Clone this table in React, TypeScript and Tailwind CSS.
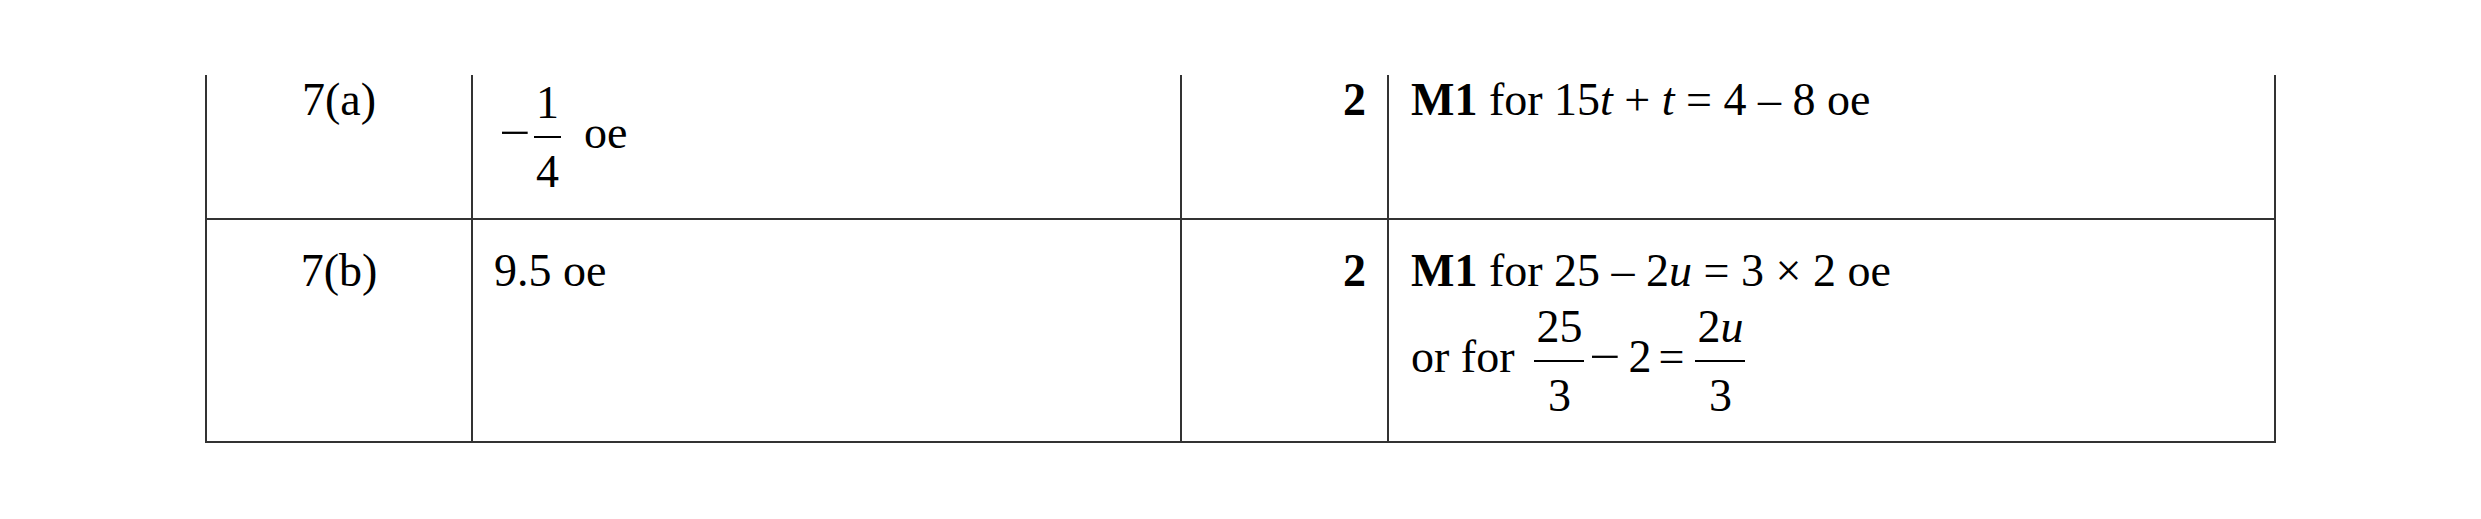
import type { ReactNode } from 'react'

const serif = { fontFamily: '"Liberation Serif", "Times New Roman", serif' }

function Frac({ num, den }: { num: ReactNode; den: ReactNode }) {
  return (
    <span className="inline-flex flex-col items-stretch text-center align-middle">
      <span className="block px-[2px] pb-[10px] leading-[46px]">{num}</span>
      <span className="block h-[2px] bg-black" />
      <span className="block px-[2px] pt-[11px] leading-[46px]">{den}</span>
    </span>
  )
}

function Minus({ className = '' }: { className?: string }) {
  return <span className={`inline-block scale-x-[1.2] ${className}`}>−</span>
}

const cell = 'border-l-2 border-b-2 border-[#333]'

export default function App() {
  return (
    <div
      className="w-[2481px] h-[519px] bg-white text-black text-[46px] leading-[49px] pt-[75px] pl-[205px]"
      style={serif}
    >
      <div className="grid grid-cols-[266px_709px_207px_889px] grid-rows-[145px_223px]">
        {/* 7(a) */}
        <div className={`${cell} text-center`}>7(a)</div>
        <div className={`${cell} pl-[21px] pt-[5px] whitespace-nowrap`}>
          <Minus className="ml-[8px]" />
          <span className="ml-[6px]">
            <Frac num="1" den="4" />
          </span>
          <span className="ml-[23px]">oe</span>
        </div>
        <div className={`${cell} text-right pr-[21px] font-bold`}>2</div>
        <div className={`${cell} border-r-2 pl-[22px] whitespace-nowrap`}>
          <b>M1</b> for 15<i>t</i> + <i>t</i> = 4 – 8 oe
        </div>

        {/* 7(b) */}
        <div className={`${cell} text-center pt-[26px]`}>7(b)</div>
        <div className={`${cell} pl-[21px] pt-[26px]`}>9.5 oe</div>
        <div className={`${cell} text-right pr-[21px] pt-[26px] font-bold`}>2</div>
        <div className={`${cell} border-r-2 pl-[22px] pt-[26px] whitespace-nowrap`}>
          <div>
            <b>M1</b> for 25 – 2<i>u</i> = 3 × 2 oe
          </div>
          <div className="mt-[9px]">
            or for
            <span className="ml-[20px]">
              <Frac num="25" den="3" />
            </span>
            <Minus className="ml-[8px]" />
            <span className="ml-[10px]">2</span>
            <span className="ml-[7px]">=</span>
            <span className="ml-[11px]">
              <Frac
                num={
                  <>
                    2<i>u</i>
                  </>
                }
                den="3"
              />
            </span>
          </div>
        </div>
      </div>
    </div>
  )
}
